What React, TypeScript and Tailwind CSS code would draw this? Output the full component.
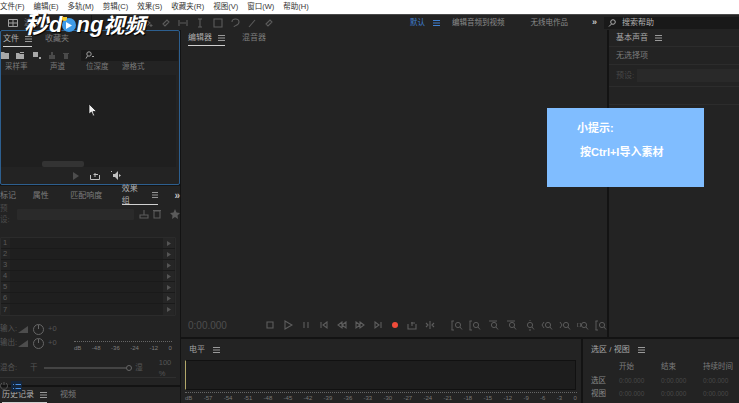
import React from 'react';

const font = "font-['Liberation_Sans','Noto_Sans_CJK_SC',sans-serif]";

const menus = ['文件(F)', '编辑(E)', '多轨(M)', '剪辑(C)', '效果(S)', '收藏夹(R)', '视图(V)', '窗口(W)', '帮助(H)'];
const columns = ['采样率', '声道', '位深度', '源格式'];
const levelTicks = ['dB', '-57', '-54', '-51', '-48', '-45', '-42', '-39', '-36', '-33', '-30', '-27', '-24', '-21', '-18', '-15', '-12', '-9', '-6', '-3', '0'];

function Burger({ className = 'text-[#9a9a9a]' }: { className?: string }) {
  return (
    <svg width="7" height="6" viewBox="0 0 7 6" className={className}>
      <path d="M0 .5h7M0 3h7M0 5.500h7" stroke="currentColor" strokeWidth="1" />
    </svg>
  );
}

function Glyph({ d, size = 10, className = 'text-[#5c5c5c]' }: { d: string; size?: number; className?: string }) {
  return (
    <svg width={size} height={size} viewBox="0 0 10 10" fill="none" stroke="currentColor" strokeWidth="1.100" className={className}>
      <path d={d} />
    </svg>
  );
}

function ZoomIcon({ prefix }: { prefix: string }) {
  return (
    <svg width="12" height="11" viewBox="0 0 12 11" fill="none" stroke="currentColor" className="text-[#5a5a5a]">
      <path d={prefix} />
      <circle cx="7" cy="5" r="2.600" />
      <path d="M9 7l2 2.500" />
    </svg>
  );
}

function ToolBar() {
  const tools = ['M1 1l5 4-5 4zM7 6v3M5.500 7.500h3', 'M2 6l4-4 2 2-4 4z', 'M1 2v6M9 2v6M2 5h6', 'M3 1h4M5 1v8M3 9h4', 'M1 1h8v8H1z', 'M2 4c0-4 7-4 7 0s-5 3-5 5', 'M2 9l6-7', 'M2 6l4-4 2 2-4 4z'];
  return (
    <div className="flex h-[16px] items-center bg-[#232323] border-t border-[#4a4a4a]">
      <div className="flex h-full w-[92px] items-center pl-[8px] gap-[6px] border-r border-[#171717]">
        <svg width="10" height="8" viewBox="0 0 10 8" fill="none" stroke="#a0a0a0"><path d="M.5.500h9v7h-9zM.5 4h9M5 .500v7" /></svg>
        <span className="text-[8px] text-[#777]">波形</span>
      </div>
      <div className="ml-[52px] flex w-[130px] justify-between">
        {tools.map((d, i) => <Glyph key={i} d={d} />)}
      </div>
      <div className="ml-[136px] flex items-center text-[7.500px]">
        <span className="text-[#3f7fd0]">默认</span>
        <Burger className="ml-[8px] text-[#3f7fd0]" />
        <span className="ml-[12px] text-[#8a8a8a]">编辑音频到视频</span>
        <span className="ml-[26px] text-[#8a8a8a]">无线电作品</span>
        <span className="ml-[24px] text-[9px] font-bold text-[#c8c8c8]">»</span>
      </div>
      <div className="ml-[7px] flex h-[12px] flex-1 items-center gap-[6px] bg-[#191919] pl-[4px] text-[8px] text-[#b0b0b0]">
        <svg width="8" height="8" viewBox="0 0 8 8" fill="none" stroke="#b0b0b0"><circle cx="5" cy="3" r="2.300" /><path d="M3.500 5L1 7.500" /></svg>
        搜索帮助
      </div>
    </div>
  );
}

function Tab({ label, active, burger }: { label: string; active?: boolean; burger?: boolean }) {
  return (
    <div className={`flex h-full items-center gap-[6px] border-b ${active ? 'border-[#d0d0d0] text-[#b0b0b0]' : 'border-transparent text-[#7d7d7d]'}`}>
      <span>{label}</span>
      {burger && <Burger />}
    </div>
  );
}

function FilesPanel() {
  return (
    <section className="flex h-[155px] flex-col rounded-[2px] border border-[#2d5f8f] bg-[#232323]">
      <div className="flex h-[16px] gap-[13px] pl-[2px] text-[8px]">
        <Tab label="文件" active burger />
        <Tab label="收藏夹" />
      </div>
      <div className="mt-[2px] flex h-[12px] items-center">
        <div className="flex w-[76px] gap-[7px] text-[#a8a8a8]">
          <svg width="8" height="7" viewBox="0 0 8 7" fill="currentColor"><path d="M0 0h3l1 1h4v6H0z" /></svg>
          <svg width="9" height="7" viewBox="0 0 9 7" fill="currentColor"><path d="M0 1h3l1 1h4v5H0zM4 0h4v1H4z" /></svg>
          <svg width="9" height="7" viewBox="0 0 9 7" fill="currentColor"><path d="M1 0h5v5H1zM7 5h2v2H7z" /></svg>
          <svg width="8" height="7" viewBox="0 0 8 7" fill="#4a4a4a"><path d="M1 3h6v4H1zM3 0h2v3H3z" /></svg>
          <svg width="6" height="7" viewBox="0 0 6 7" fill="#4a4a4a"><path d="M0 1h6v1H0zM1 2h4v5H1z" /></svg>
        </div>
        <div className="mr-[1px] ml-[4px] flex h-[11px] flex-1 items-center rounded-[1px] bg-[#1a1a1a] pl-[4px]">
          <svg width="10" height="8" viewBox="0 0 10 8" fill="none" stroke="#a0a0a0"><circle cx="4" cy="3" r="2.200" /><path d="M2.500 5L1 7.500M7 5l1 1 1-1" /></svg>
        </div>
      </div>
      <div className="flex h-[12px] items-center text-[7.500px] text-[#7a7a7a]">
        {columns.map((c, i) => (
          <span key={c} className={['ml-[4px] w-[45px]', 'w-[36px]', 'w-[36px]', ''][i]}>{c}</span>
        ))}
      </div>
      <div className="relative flex-1 rounded-[1px] bg-[#1f1f1f] mr-[3px] mt-[2px]">
        <div className="absolute bottom-0 left-[41px] h-[6px] w-[42px] rounded-[2px] bg-[#333]" />
        <svg width="10" height="14" viewBox="0 0 10 14" className="absolute left-[87px] top-[28px]">
          <path d="M1 1v10l2.500-2 1.500 4 1.500-.6L5 8.500h3.500z" fill="#eee" stroke="#111" strokeWidth=".7" />
        </svg>
      </div>
      <div className="flex h-[17px] items-center justify-center gap-[10px] pl-[14px] text-[#c0c0c0]">
        <svg width="8" height="8" viewBox="0 0 8 8" fill="#4d4d4d"><path d="M1 0l6 4-6 4z" /></svg>
        <svg width="10" height="8" viewBox="0 0 10 8" fill="none" stroke="currentColor"><path d="M.5 3v4.500h9V3M5 5V1M3.500 2.500H8" /></svg>
        <svg width="12" height="9" viewBox="0 0 12 9" fill="currentColor"><path d="M1 0h1v1H1zM3 3h2l3-3v9L5 6H3zM9 3l2 1.500L9 6z" /></svg>
      </div>
    </section>
  );
}

function EffectsPanel() {
  return (
    <section className="flex h-[200px] flex-col bg-[#232323] border-t border-[#151515]">
      <div className="flex h-[19px] items-center text-[8px]">
        <span className="w-[33px] text-[#7d7d7d]">标记</span>
        <span className="w-[38px] text-[#7d7d7d]">属性</span>
        <span className="w-[52px] text-[#7d7d7d]">匹配响度</span>
        <Tab label="效果组" active burger />
        <span className="ml-[16px] text-[10px] font-bold text-[#c0c0c0]">»</span>
      </div>
      <div className="flex h-[18px] items-center text-[7.500px] text-[#4c4c4c]">
        <span className="w-[17px]">预设:</span>
        <div className="h-[11px] w-[117px] rounded-[1px] bg-[#2a2a2a]" />
        <div className="ml-[5px] flex items-center gap-[3px]">
          <Glyph d="M1 9h8V6H1zM5 1v5" />
          <Glyph d="M2 2h6v7H2zM1 1.500h8" />
          <svg width="10" height="10" viewBox="0 0 10 10" fill="#5a5a5a" className="ml-[5px]"><path d="M5 0l1.500 3.500L10 4 7.500 6.500 8 10 5 8 2 10l.5-3.500L0 4l3.500-.5z" /></svg>
        </div>
      </div>
      <div className="mt-[14px] mr-[4px] flex flex-col rounded-[1px] border border-[#2b2b2b] text-[7.500px] text-[#5a5a5a]">
        {[1, 2, 3, 4, 5, 6, 7].map(n => (
          <div key={n} className="flex h-[11px] items-center border-b border-[#1a1a1a] last:border-b-0">
            <span className="w-[9px] pl-[2px]">{n}</span>
            <div className="h-full w-[153px] bg-[#1f1f1f]" />
            <div className="flex h-full w-[11px] items-center justify-center bg-[#262626]">
              <svg width="4" height="5" viewBox="0 0 4 5" fill="#555"><path d="M0 0l4 2.500L0 5z" /></svg>
            </div>
          </div>
        ))}
      </div>
      <div className="relative mt-[6px] flex-1 text-[7.500px] text-[#555]">
        {['输入:', '输出:'].map(label => (
          <div key={label} className="flex h-[14px] items-center">
            <span className="w-[18px]">{label}</span>
            <svg width="12" height="7" viewBox="0 0 12 7" fill="#4d4d4d"><path d="M0 7l10-7v7z" /></svg>
            <svg width="13" height="13" viewBox="0 0 13 13" fill="none" stroke="#666" className="ml-[2px]"><circle cx="6.500" cy="6.500" r="5" /><path d="M6.500 2v4" /></svg>
            <span className="ml-[3px]">+0</span>
          </div>
        ))}
        <div className="absolute left-[74px] top-[19px] flex w-[98px] justify-between text-[6px] text-[#7d7d7d] border-t border-dotted border-[#666] pt-[2px]">
          {['dB', '-48', '-36', '-24', '-12', '0'].map(t => <span key={t}>{t}</span>)}
        </div>
        <div className="mt-[12px] flex h-[12px] items-center">
          <span className="w-[30px]">混合:</span>
          <span>干</span>
          <div className="ml-[7px] h-[2px] w-[82px] bg-[#444]" />
          <div className="size-[6px] rounded-full border border-[#666]" />
          <span className="ml-[3px]">湿</span>
          <span className="ml-[16px]">100 %</span>
        </div>
        <div className="mt-[3px] mr-[4px] flex h-[15px] items-center border-t border-[#2f2f2f] pt-[2px]">
          <svg width="8" height="10" viewBox="0 0 8 10" fill="none" stroke="#555"><path d="M2 2a3.500 3.500 0 1 0 4 0M4 1v3" /></svg>
          <div className="ml-[3px] flex h-[11px] w-[11px] items-center justify-center rounded-[1px] bg-[#14263d]">
            <svg width="8" height="5" viewBox="0 0 8 5" stroke="#4a90e2"><path d="M0 .500h1M0 4.500h1M2.500 .500H8M2.500 4.500H8" /></svg>
          </div>
        </div>
      </div>
    </section>
  );
}

function TransportBar() {
  const transport = ['M2 2h6v6H2z', 'M2 1l7 4-7 4z', 'M3 2v6M7 2v6', 'M2 2v6M8 2L4 5l4 3z', 'M5 2L1 5l4 3zM9 2L5 5l4 3z', 'M1 2l4 3-4 3zM5 2l4 3-4 3z', 'M8 2v6M2 2l4 3-4 3z'];
  const zooms = ['M1 1v9M.5 1H3M.5 10H3', 'M1 1v9M.5 1H3M.5 10H3', 'M2 1h8', 'M2 1h8', 'M7 0v1M7 9v2', 'M3 2L1 5l2 3', 'M1 2l2 3-2 3', 'M1 3L0 5l1 2M3 3l1 2-1 2', 'M1 1v9M.5 1H3M.5 10H3'];
  return (
    <div className="flex h-[24px] items-center pl-[7px]">
      <span className="w-[80px] text-[10px] text-[#4e4e4e]">0:00.000</span>
      <div className="flex items-center gap-[8px]">
        {transport.map((d, i) => <Glyph key={i} d={d} className="text-[#5e5e5e]" />)}
        <div className="size-[6px] rounded-full bg-[#f04b3a] mx-[1px]" />
        <Glyph d="M1 4v5h8V4M5 6V2M4 3h4" className="text-[#5e5e5e]" />
        <Glyph d="M5 1v8M1 3L3 5 1 7M9 3L7 5l2 2" className="text-[#5e5e5e]" />
      </div>
      <div className="ml-[16px] flex gap-[6px]">
        {zooms.map((d, i) => <ZoomIcon key={i} prefix={d} />)}
      </div>
    </div>
  );
}

function LevelsPanel() {
  return (
    <section className="flex w-[400px] flex-col bg-[#232323]">
      <div className="flex h-[21px] items-center gap-[8px] pl-[8px] text-[8px] text-[#a0a0a0]">
        <span>电平</span>
        <Burger />
      </div>
      <div className="ml-[4px] mr-[5px] h-[30px] border border-[#111] border-l-[#b3a86a] bg-[#1d1d1d]" />
      <div className="ml-[4px] mr-[4px] mt-[2px] flex justify-between text-[6px] text-[#777] border-t border-dotted border-[#666] pt-[1px]">
        {levelTicks.map(t => <span key={t}>{t}</span>)}
      </div>
    </section>
  );
}

function SelectionPanel() {
  const rows = ['选区', '视图'];
  return (
    <section className="ml-[2px] flex flex-1 flex-col bg-[#232323] pl-[8px]">
      <div className="flex h-[21px] items-center gap-[8px] text-[8px] text-[#a8a8a8]">
        <span>选区 / 视图</span>
        <Burger />
      </div>
      <div className="flex h-[14px] items-center text-[7.500px] text-[#7c7c7c]">
        <span className="ml-[28px] w-[42px]">开始</span>
        <span className="w-[42px]">结束</span>
        <span>持续时间</span>
      </div>
      {rows.map(r => (
        <div key={r} className="flex h-[13px] items-center text-[7.500px]">
          <span className="w-[28px] text-[#8a8a8a]">{r}</span>
          {[0, 1, 2].map(i => <span key={i} className="w-[42px] text-[6.500px] text-[#484848]">0:00.000</span>)}
        </div>
      ))}
    </section>
  );
}

function SoundPanel() {
  return (
    <aside className="ml-[2px] flex flex-1 flex-col bg-[#232323] text-[8px]">
      <div className="flex h-[17px] items-center gap-[7px] border-b border-[#2c2c2c] pl-[7px] text-[#a8a8a8]">
        <span>基本声音</span>
        <Burger />
      </div>
      <div className="flex h-[18px] items-center border-b border-[#2c2c2c] pl-[7px] text-[#7c7c7c]">无选择项</div>
      <div className="flex h-[22px] items-center border-b border-[#2c2c2c] pl-[7px] text-[#474747]">
        <span className="w-[21px]">预设:</span>
        <div className="h-[13px] flex-1 bg-[#292929]" />
      </div>
      <div className="h-[18px] border-b border-[#2c2c2c]" />
    </aside>
  );
}

export default function App() {
  return (
    <div className={`relative h-[403px] w-[739px] overflow-hidden bg-[#131313] ${font}`}>
      <nav className="flex h-[14px] items-center gap-[9px] bg-white text-[7.500px] text-[#333]">
        {menus.map(m => <span key={m}>{m}</span>)}
      </nav>
      <ToolBar />
      <main className="flex h-[373px]">
        <div className="flex w-[185px] flex-col">
          <FilesPanel />
          <EffectsPanel />
          <section className="mt-[2px] flex flex-1 gap-[13px] bg-[#232323] pl-[2px] text-[8px]">
            <Tab label="历史记录" active burger />
            <Tab label="视频" />
          </section>
        </div>
        <div className="ml-[1px] flex flex-1 flex-col">
          <div className="flex h-[308px]">
            <section className="flex w-[426px] flex-col bg-[#232323]">
              <div className="flex h-[16px] gap-[17px] pl-[7px] text-[8px]">
                <Tab label="编辑器" active burger />
                <Tab label="混音器" />
              </div>
              <div className="flex-1" />
              <TransportBar />
            </section>
            <SoundPanel />
          </div>
          <div className="mt-[2px] flex flex-1">
            <LevelsPanel />
            <SelectionPanel />
          </div>
        </div>
      </main>

      {/* watermark over the app */}
      <div className="absolute left-[24px] top-[13px] flex items-center text-[24px] italic font-bold leading-none text-white [text-shadow:1px_1px_1px_#000]">
        <span>秒</span>
        <span className="ml-[1px] text-[22px]">d</span>
        <span className="flex size-[14px] items-center justify-center rounded-full bg-[#3f9be8]">
          <svg width="6" height="7" viewBox="0 0 6 7" fill="#fff"><path d="M0 0l6 3.500L0 7z" /></svg>
        </span>
        <span className="text-[22px]">ng</span>
        <span className="text-[21px]">视频</span>
      </div>
      <div className="absolute left-[62px] top-[17px] h-[4px] w-[5px] rounded-b-full bg-[#f3c92f]" />

      {/* tip card over the editor */}
      <div className="absolute left-[547px] top-[108px] h-[79px] w-[157px] bg-[#80bdff] px-[30px] pt-[12px] text-[11px] font-bold text-white">
        <p>小提示:</p>
        <p className="mt-[7px] ml-[3px] whitespace-nowrap">按Ctrl+I导入素材</p>
      </div>
    </div>
  );
}
